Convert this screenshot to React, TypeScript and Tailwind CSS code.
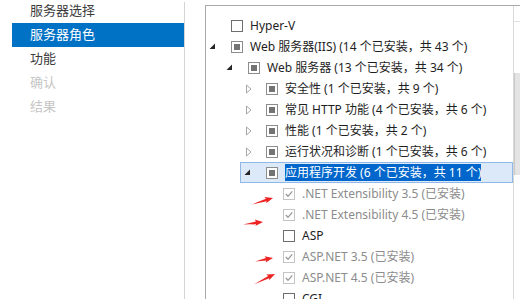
import React from 'react';

type Cb = 'empty' | 'partial' | 'checked';
type Exp = 'open' | 'closed' | null;

interface Row {
  level: number;
  exp: Exp;
  cb: Cb;
  text: string;
  installed?: boolean;
  selected?: boolean;
}

const NAV = [
  { label: '服务器选择', state: 'normal' },
  { label: '服务器角色', state: 'active' },
  { label: '功能', state: 'normal' },
  { label: '确认', state: 'disabled' },
  { label: '结果', state: 'disabled' },
];

const ROWS: Row[] = [
  { level: 0, exp: null, cb: 'empty', text: 'Hyper-V' },
  { level: 0, exp: 'open', cb: 'partial', text: 'Web 服务器(IIS) (14 个已安装，共 43 个)' },
  { level: 1, exp: 'open', cb: 'partial', text: 'Web 服务器 (13 个已安装，共 34 个)' },
  { level: 2, exp: 'closed', cb: 'partial', text: '安全性 (1 个已安装，共 9 个)' },
  { level: 2, exp: 'closed', cb: 'partial', text: '常见 HTTP 功能 (4 个已安装，共 6 个)' },
  { level: 2, exp: 'closed', cb: 'partial', text: '性能 (1 个已安装，共 2 个)' },
  { level: 2, exp: 'closed', cb: 'partial', text: '运行状况和诊断 (1 个已安装，共 6 个)' },
  { level: 2, exp: 'open', cb: 'partial', text: '应用程序开发 (6 个已安装，共 11 个)', selected: true },
  { level: 3, exp: null, cb: 'checked', text: '.NET Extensibility 3.5 (已安装)', installed: true },
  { level: 3, exp: null, cb: 'checked', text: '.NET Extensibility 4.5 (已安装)', installed: true },
  { level: 3, exp: null, cb: 'empty', text: 'ASP' },
  { level: 3, exp: null, cb: 'checked', text: 'ASP.NET 3.5 (已安装)', installed: true },
  { level: 3, exp: null, cb: 'checked', text: 'ASP.NET 4.5 (已安装)', installed: true },
  { level: 3, exp: null, cb: 'empty', text: 'CGI' },
];

const LEVEL_PAD = ['pl-[0px]', 'pl-[17px]', 'pl-[35px]', 'pl-[52px]'];

const font = { fontFamily: '"Noto Sans", "Noto Sans CJK SC", sans-serif' };

const Expander = ({ exp }: { exp: Exp }) => (
  <div className="w-[25px] h-full flex items-center pl-[3px]">
    {exp === 'open' && (
      <svg width="7" height="7" viewBox="0 0 7 7">
        <path d="M6 0.5 L6 6 L0.5 6 Z" fill="#262626" />
      </svg>
    )}
    {exp === 'closed' && (
      <svg width="8" height="10" viewBox="0 0 8 10" className="ml-[1px]">
        <path d="M1.5 1 L6 5 L1.5 9 Z" fill="none" stroke="#a6a6a6" strokeWidth="1" />
      </svg>
    )}
  </div>
);

const CheckBox = ({ cb }: { cb: Cb }) => {
  if (cb === 'partial') {
    return (
      <div className="w-[12px] h-[12px] border border-[#8c8c8c] bg-white flex items-center justify-center shrink-0">
        <div className="w-[6px] h-[6px] bg-[#737373]" />
      </div>
    );
  }
  if (cb === 'checked') {
    return (
      <div className="w-[12px] h-[12px] border border-[#c4c4c4] bg-white flex items-center justify-center shrink-0">
        <svg width="10" height="10" viewBox="0 0 10 10">
          <path d="M1.8 5 L4 7.3 L8.3 2.3" fill="none" stroke="#999999" strokeWidth="1.3" />
        </svg>
      </div>
    );
  }
  return <div className="w-[12px] h-[12px] border border-[#6e6e6e] bg-white shrink-0" />;
};

const TreeRow = ({ row }: { row: Row }) => (
  <div className={`flex h-[21px] ${LEVEL_PAD[row.level]}`}>
    <div
      className={`flex-1 flex items-center h-full box-border ${
        row.selected ? 'bg-[#dce9f9] border border-[#8fb8e8] -ml-px' : ''
      }`}
    >
      <Expander exp={row.exp} />
      <CheckBox cb={row.cb} />
      <span
        className={`ml-[7px] text-[12px] leading-[17px] whitespace-nowrap ${
          row.selected ? 'bg-[#0066cc] text-white' : row.installed ? 'text-[#8c8c8c]' : 'text-[#1e1e1e]'
        }`}
      >
        {row.text}
      </span>
    </div>
  </div>
);

const RedArrow = ({ x1, y1, x2, y2 }: { x1: number; y1: number; x2: number; y2: number }) => {
  const len = Math.hypot(x2 - x1, y2 - y1);
  const ang = (Math.atan2(y2 - y1, x2 - x1) * 180) / Math.PI;
  return (
    <g transform={`translate(${x1} ${y1}) rotate(${ang})`}>
      <path
        d={`M0 0.4 L${len - 7} -1.2 L${len - 8} -3.2 L${len} 0 L${len - 8} 3.2 L${len - 7} 1.4 Z`}
        fill="#ec2424"
      />
    </g>
  );
};

export default function App() {
  return (
    <div className="relative w-[520px] h-[299px] bg-white overflow-hidden flex" style={font}>
      {/* 左侧导航 */}
      <div className="w-[184px] shrink-0 -mt-px">
        {NAV.map((n) => (
          <div
            key={n.label}
            className={`ml-[12px] h-[24px] flex items-center pl-[18px] text-[13px] ${
              n.state === 'active'
                ? 'bg-[#0072c6] text-white'
                : n.state === 'disabled'
                ? 'text-[#c6c6c6]'
                : 'text-[#3c3c3c]'
            }`}
          >
            {n.label}
          </div>
        ))}
      </div>
      <div className="w-px bg-[#d4d4d4] mt-[2px] shrink-0" />

      {/* 角色树 */}
      <div className="flex-1 ml-[20px] mt-[5px] border-l border-t border-[#a9a9a9] flex">
        <div className="flex-1 pt-[9px] overflow-hidden">
          {ROWS.map((r) => (
            <TreeRow key={r.text} row={r} />
          ))}
        </div>
        <div className="w-[7px] border-l border-[#d9d9d9] flex flex-col">
          <div className="h-[16px] border-b border-[#e2e2e2]" />
          <div className="mt-[51px] h-[102px] bg-[#e4e4e4] border-l border-[#c8c8c8]" />
        </div>
      </div>

      {/* 标注箭头 */}
      <svg className="absolute inset-0 pointer-events-none" width="520" height="299">
        <RedArrow x1={252} y1={204} x2={273} y2={198} />
        <RedArrow x1={243} y1={224} x2={263} y2={222} />
        <RedArrow x1={255} y1={261} x2={273} y2={258} />
        <RedArrow x1={254} y1={284} x2={275} y2={274} />
      </svg>
    </div>
  );
}
